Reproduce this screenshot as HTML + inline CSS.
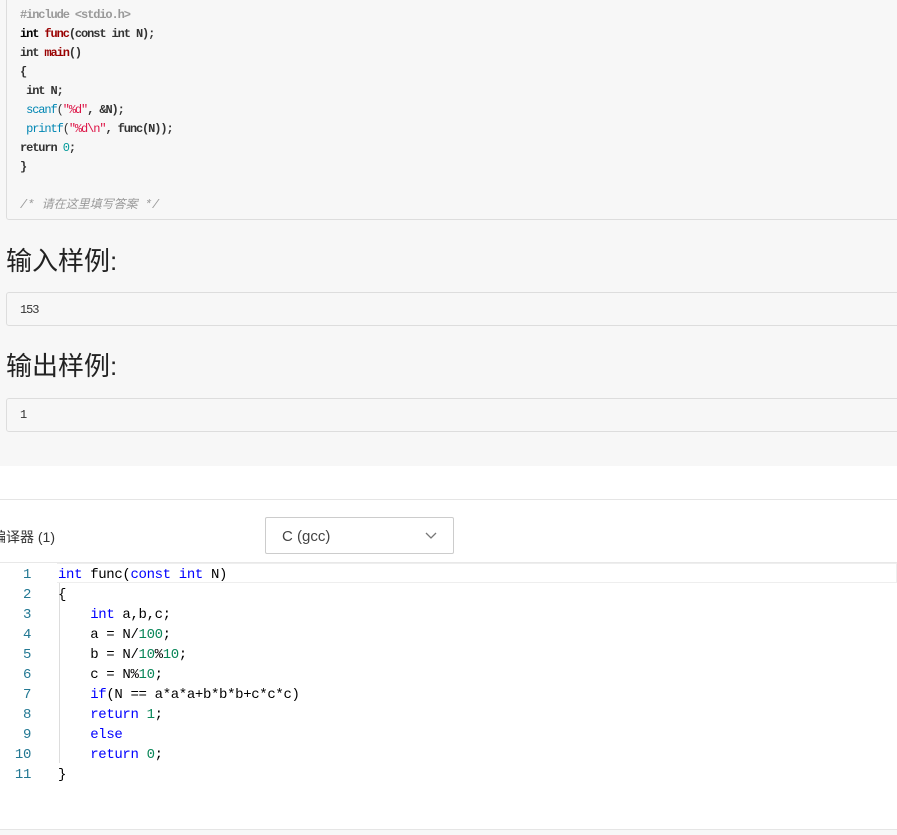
<!DOCTYPE html>
<html><head><meta charset="utf-8"><style>
*{margin:0;padding:0;box-sizing:border-box}
body{width:897px;height:835px;overflow:hidden;background:#fff;font-family:"Liberation Sans","Noto Sans CJK SC",sans-serif;position:relative}
.top{position:absolute;left:0;top:0;width:897px;height:466px;background:#f7f7f7}
.box{position:absolute;left:6px;width:900px;border:1px solid #ddd;border-radius:3px;background:#f7f7f7}
pre{font-family:"Liberation Mono","Noto Sans CJK SC",monospace;font-size:12px;letter-spacing:-1.1px;line-height:19px;color:#333;font-weight:bold}
.k{color:#000}.f{color:#990000}.b{color:#0086b3;font-weight:normal}.s{color:#dd1144;font-weight:normal}.n{color:#009999;font-weight:normal}.c{color:#999;font-style:italic;font-weight:normal;letter-spacing:0}.m{color:#999}
h3{position:absolute;left:6px;font-size:26px;font-weight:normal;color:#222;font-family:"Liberation Sans","Noto Sans CJK SC",sans-serif}
.ed{position:absolute;left:0;top:565px;width:897px;font-family:"Liberation Mono","DejaVu Sans Mono",monospace;font-size:14px;letter-spacing:-0.35px;line-height:20px}
.ln{position:absolute;left:0;width:31px;text-align:right;color:#237893}
.cd{position:absolute;left:58px;white-space:pre;color:#000}
.kw{color:#0000ff}.nm{color:#098658}
</style></head><body>
<div class="top">
<div class="box" style="top:-3px;height:223px;padding:8px 0 0 13px">
<pre><span class="m">#include &lt;stdio.h&gt;</span>
<span class="k">int</span> <span class="f">func</span>(const int N);
int <span class="f">main</span>()
{
 int N;
 <span class="b">scanf</span><span style="font-weight:normal">(</span><span class="s">"%d"</span>, &amp;N);
 <span class="b">printf</span><span style="font-weight:normal">(</span><span class="s">"%d\n"</span>, func(N));
return <span class="n">0</span>;
}

<span class="c">/* 请在这里填写答案 */</span></pre>
</div>
<h3 style="top:241px">输入样例:</h3>
<div class="box" style="top:292px;height:34px;padding:8px 0 0 13px"><pre style="font-weight:normal">153</pre></div>
<h3 style="top:346px">输出样例:</h3>
<div class="box" style="top:398px;height:34px;padding:7px 0 0 13px"><pre style="font-weight:normal">1</pre></div>
</div>
<div style="position:absolute;left:0;top:499px;width:897px;border-top:1px solid #e5e5e5"></div>
<div style="position:absolute;left:-8px;top:527px;font-size:14px;color:#333;font-family:'Liberation Sans','Noto Sans CJK SC',sans-serif">编译器 (1)</div>
<div style="position:absolute;left:265px;top:517px;width:189px;height:37px;border:1px solid #ccc;border-radius:2px;font-size:15px;color:#444;padding:10px 0 0 16px">C (gcc)
<svg style="position:absolute;right:16px;top:14px" width="12" height="8" viewBox="0 0 12 8"><path d="M1 1L6 6L11 1" fill="none" stroke="#777" stroke-width="1.3"/></svg></div>
<div style="position:absolute;left:0;top:562px;width:897px;border-top:1px solid #e8e8e8"></div>
<div style="position:absolute;left:57px;top:563px;width:840px;height:20px;border:1px solid #eee;border-left:none"></div>
<div style="position:absolute;left:59px;top:583px;height:180px;border-left:1px solid #ddd"></div>
<div class="ed">
<div class="ln" style="top:0">1</div><div class="cd" style="top:0"><span class="kw">int</span> func(<span class="kw">const</span> <span class="kw">int</span> N)</div>
<div class="ln" style="top:20px">2</div><div class="cd" style="top:20px">{</div>
<div class="ln" style="top:40px">3</div><div class="cd" style="top:40px">    <span class="kw">int</span> a,b,c;</div>
<div class="ln" style="top:60px">4</div><div class="cd" style="top:60px">    a = N/<span class="nm">100</span>;</div>
<div class="ln" style="top:80px">5</div><div class="cd" style="top:80px">    b = N/<span class="nm">10</span>%<span class="nm">10</span>;</div>
<div class="ln" style="top:100px">6</div><div class="cd" style="top:100px">    c = N%<span class="nm">10</span>;</div>
<div class="ln" style="top:120px">7</div><div class="cd" style="top:120px">    <span class="kw">if</span>(N == a*a*a+b*b*b+c*c*c)</div>
<div class="ln" style="top:140px">8</div><div class="cd" style="top:140px">    <span class="kw">return</span> <span class="nm">1</span>;</div>
<div class="ln" style="top:160px">9</div><div class="cd" style="top:160px">    <span class="kw">else</span></div>
<div class="ln" style="top:180px">10</div><div class="cd" style="top:180px">    <span class="kw">return</span> <span class="nm">0</span>;</div>
<div class="ln" style="top:200px">11</div><div class="cd" style="top:200px">}</div>
</div>
<div style="position:absolute;left:0;top:829px;width:897px;height:6px;border-top:1px solid #e5e5e5;background:#f7f7f7"></div>
</body></html>
